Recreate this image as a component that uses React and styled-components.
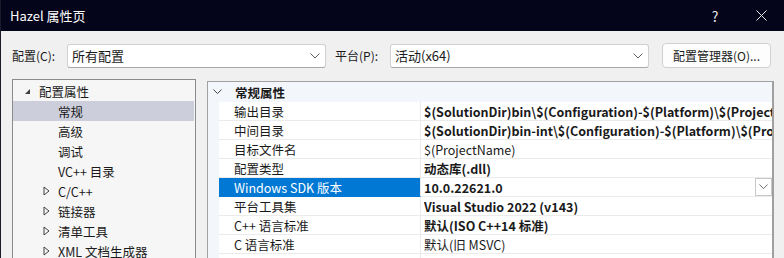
import React from "react";
import styled, { createGlobalStyle } from "styled-components";

const Global = createGlobalStyle`
  html, body {
    margin: 0;
    padding: 0;
    background: #f0f0f0;
  }
  body {
    font-family: "Noto Sans CJK SC", "Noto Sans", sans-serif;
    font-size: 12px;
    color: #1a1a1a;
  }
`;

const Window = styled.div`
  width: 784px;
  height: 258px;
  overflow: hidden;
  background: #f0f0f0;
  border-left: 1px solid #1a1a2a;
  box-sizing: border-box;
  display: flex;
  flex-direction: column;
`;

const TitleBar = styled.div`
  height: 31px;
  flex: none;
  background: #04041a;
  color: #ffffff;
  display: flex;
  align-items: center;
  padding-left: 9px;
  font-size: 13px;
`;

const Title = styled.div`
  flex: 1;
`;

const TitleButton = styled.div`
  width: 46px;
  height: 31px;
  display: flex;
  align-items: center;
  justify-content: center;
  font-size: 14px;
  color: #e8e8e8;
`;

const Toolbar = styled.div`
  display: flex;
  align-items: center;
  height: 25px;
  margin-top: 12px;
  padding-left: 11px;
`;

const Label = styled.div`
  width: ${(p) => p.w}px;
  flex: none;
  font-size: 12px;
`;

const Select = styled.div`
  width: 253px;
  height: 22px;
  flex: none;
  background: #ffffff;
  border: 1px solid #d0d0d0;
  border-bottom-color: #a8a8a8;
  border-radius: 3px;
  display: flex;
  align-items: center;
  padding-left: 4px;
  box-sizing: content-box;
  margin-right: ${(p) => p.mr}px;
`;

const SelectText = styled.div`
  flex: 1;
  font-size: 13px;
`;

const Chevron = ({ size = 10, color = "#606060" }) => (
  <svg width={size} height={size / 2 + 1} viewBox="0 0 10 6">
    <polyline points="0.5,0.5 5,5 9.5,0.5" fill="none" stroke={color} strokeWidth="1" />
  </svg>
);

const ChevronBox = styled.div`
  width: 20px;
  display: flex;
  justify-content: center;
`;

const Button = styled.div`
  width: 107px;
  height: 23px;
  flex: none;
  background: #fdfdfd;
  border: 1px solid #d0d0d0;
  border-radius: 4px;
  display: flex;
  align-items: center;
  justify-content: center;
  font-size: 12px;
`;

const Content = styled.div`
  display: flex;
  align-items: flex-start;
  margin-top: 11px;
  padding-left: 11px;
  flex: 1;
`;

const Tree = styled.div`
  width: 182px;
  height: 200px;
  flex: none;
  background: #f6f6f6;
  border: 1px solid #8c8c8c;
  border-bottom: none;
  padding-top: 1px;
`;

const TreeRow = styled.div`
  height: 20px;
  display: flex;
  align-items: center;
  padding-left: ${(p) => p.indent}px;
  background: ${(p) => (p.selected ? "#cccedb" : "transparent")};
  margin-right: 1px;
  font-size: 12.5px;
`;

const Twisty = styled.div`
  width: 15px;
  flex: none;
  display: flex;
  align-items: center;
`;

const Grid = styled.div`
  margin-left: 11px;
  margin-top: 2px;
  width: 564px;
  height: 200px;
  flex: none;
  background: #ffffff;
  border: 1px solid #a0a0a0;
  border-right-width: 2px;
  border-bottom: none;
  display: flex;
  flex-direction: column;
`;

const GroupHeader = styled.div`
  height: 20px;
  flex: none;
  background: #f3f6fb;
  display: flex;
  align-items: center;
  font-weight: bold;
  font-size: 12.5px;
`;

const HeaderIcon = styled.div`
  width: 27px;
  padding-left: 5px;
  box-sizing: border-box;
  display: flex;
  align-items: center;
`;

const Row = styled.div`
  height: 19px;
  flex: none;
  display: flex;
  border-left: 11px solid #f3f6fb;
  box-sizing: border-box;
`;

const NameCell = styled.div`
  width: 202px;
  flex: none;
  box-sizing: border-box;
  padding-left: 15px;
  display: flex;
  align-items: center;
  font-size: 12.5px;
  white-space: nowrap;
  background: ${(p) => (p.selected ? "#0078d4" : "#ffffff")};
  color: ${(p) => (p.selected ? "#ffffff" : "#1a1a1a")};
  border-bottom: 1px solid ${(p) => (p.selected ? "#0078d4" : "#ebebeb")};
  border-right: 1px solid #ebebeb;
`;

const ValueCell = styled.div`
  flex: 1;
  min-width: 0;
  display: flex;
  align-items: center;
  padding-left: 3px;
  font-size: 12.5px;
  font-weight: ${(p) => (p.bold ? "bold" : "normal")};
  white-space: nowrap;
  overflow: hidden;
  border-bottom: 1px solid #ebebeb;
`;

const ValueText = styled.div`
  flex: 1;
  overflow: hidden;
`;

const DropButton = styled.div`
  width: 15px;
  height: 16px;
  flex: none;
  border: 1px solid #c8c8c8;
  background: #ffffff;
  display: flex;
  align-items: center;
  justify-content: center;
`;

const Expanded = () => (
  <svg width="7" height="7" viewBox="0 0 7 7">
    <polygon points="6,1 6,6 1,6" fill="#404040" />
  </svg>
);

const Collapsed = () => (
  <svg width="7" height="10" viewBox="0 0 7 10">
    <polygon points="1,1 6,5 1,9" fill="none" stroke="#404040" strokeWidth="1" />
  </svg>
);

const treeItems = [
  { label: "配置属性", indent: 11, twisty: "open" },
  { label: "常规", indent: 45, selected: true },
  { label: "高级", indent: 45 },
  { label: "调试", indent: 45 },
  { label: "VC++ 目录", indent: 45 },
  { label: "C/C++", indent: 30, twisty: "closed" },
  { label: "链接器", indent: 30, twisty: "closed" },
  { label: "清单工具", indent: 30, twisty: "closed" },
  { label: "XML 文档生成器", indent: 30, twisty: "closed" },
];

const props = [
  { name: "输出目录", value: "$(SolutionDir)bin\\$(Configuration)-$(Platform)\\$(ProjectName)\\", bold: true },
  { name: "中间目录", value: "$(SolutionDir)bin-int\\$(Configuration)-$(Platform)\\$(ProjectName)\\", bold: true },
  { name: "目标文件名", value: "$(ProjectName)" },
  { name: "配置类型", value: "动态库(.dll)", bold: true },
  { name: "Windows SDK 版本", value: "10.0.22621.0", bold: true, selected: true },
  { name: "平台工具集", value: "Visual Studio 2022 (v143)", bold: true },
  { name: "C++ 语言标准", value: "默认(ISO C++14 标准)", bold: true },
  { name: "C 语言标准", value: "默认(旧 MSVC)" },
  { name: "", value: "" },
];

export default function App() {
  return (
    <>
      <Global />
      <Window>
        <TitleBar>
          <Title>Hazel 属性页</Title>
          <TitleButton>?</TitleButton>
          <TitleButton>
            <svg width="11" height="11" viewBox="0 0 11 11">
              <path d="M0.5 0.5 L10.5 10.5 M10.5 0.5 L0.5 10.5" stroke="#e8e8e8" strokeWidth="1" />
            </svg>
          </TitleButton>
        </TitleBar>
        <Toolbar>
          <Label w={55}>配置(C):</Label>
          <Select mr={9}>
            <SelectText>所有配置</SelectText>
            <ChevronBox>
              <Chevron />
            </ChevronBox>
          </Select>
          <Label w={55}>平台(P):</Label>
          <Select mr={13}>
            <SelectText>活动(x64)</SelectText>
            <ChevronBox>
              <Chevron />
            </ChevronBox>
          </Select>
          <Button>配置管理器(O)...</Button>
        </Toolbar>
        <Content>
          <Tree>
            {treeItems.map((t) => (
              <TreeRow key={t.label} indent={t.indent} selected={t.selected}>
                {t.twisty && (
                  <Twisty>{t.twisty === "open" ? <Expanded /> : <Collapsed />}</Twisty>
                )}
                {t.label}
              </TreeRow>
            ))}
          </Tree>
          <Grid>
            <GroupHeader>
              <HeaderIcon>
                <Chevron size={9} color="#303030" />
              </HeaderIcon>
              常规属性
            </GroupHeader>
            {props.map((p, i) => (
              <Row key={i}>
                <NameCell selected={p.selected}>{p.name}</NameCell>
                <ValueCell bold={p.bold}>
                  <ValueText>{p.value}</ValueText>
                  {p.selected && (
                    <DropButton>
                      <Chevron size={9} />
                    </DropButton>
                  )}
                </ValueCell>
              </Row>
            ))}
          </Grid>
        </Content>
      </Window>
    </>
  );
}
